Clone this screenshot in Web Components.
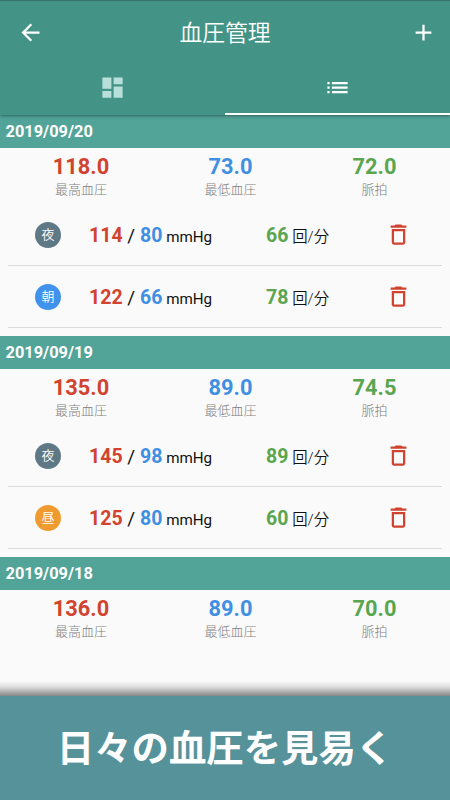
<!DOCTYPE html>
<html lang="ja">
<head>
  <meta charset="UTF-8">
  <meta name="viewport" content="width=device-width, initial-scale=1.0">
  <title>血圧管理</title>
  <style>
    body {
      margin: 0;
      font-family: Roboto, "Noto Sans CJK JP", sans-serif;
      background: #fafafa;
      --red: #d1432f;
      --blue: #3f8fe3;
      --green: #5aa650;
    }
  </style>
</head>
<body>
  <pressure-app></pressure-app>

  <script>
    class AppHeader extends HTMLElement {
      constructor() {
        super();
        this.shadowDOM = this.attachShadow({ mode: "open" });
      }

      connectedCallback() {
        this.render();
      }

      render() {
        this.shadowDOM.innerHTML = `
          <style>
            :host {
              display: block;
              flex: none;
              height: 115px;
              box-sizing: border-box;
              border-top: 1px solid #34766b;
              background: #439486;
              color: white;
              position: relative;
              z-index: 1;
              box-shadow: 0 1px 3px rgba(0, 0, 0, 0.4);
            }

            .bar {
              display: grid;
              grid-template-columns: 61px 1fr 53px;
              align-items: center;
              justify-items: center;
              height: 62px;
            }

            h1 {
              margin: 0;
              box-sizing: border-box;
              width: 100%;
              font-size: 22.8px;
              line-height: 32px;
              font-weight: 350;
              text-align: center;
              padding: 4px 8px 0 0;
            }

            svg {
              display: block;
              fill: currentColor;
            }

            .tabs {
              display: grid;
              grid-template-columns: 1fr 1fr;
              height: 52px;
            }

            .tab {
              display: flex;
              justify-content: center;
              box-sizing: border-box;
              padding-top: 11px;
              border-bottom: 2px solid transparent;
              color: #b9dfda;
            }

            .tab.active {
              color: white;
              border-color: white;
            }
          </style>
          <div class="bar">
            <svg width="27" height="27" viewBox="0 0 24 24"><path d="M20 11H7.83l5.59-5.59L12 4l-8 8 8 8 1.41-1.41L7.83 13H20v-2z"/></svg>
            <h1><slot></slot></h1>
            <svg width="27" height="27" viewBox="0 0 24 24"><path d="M19 13h-6v6h-2v-6H5v-2h6V5h2v6h6v2z"/></svg>
          </div>
          <div class="tabs">
            <div class="tab">
              <svg width="27" height="27" viewBox="0 0 24 24"><path d="M3 13h8V3H3v10zm0 8h8v-6H3v6zm10 0h8V11h-8v10zm0-18v6h8V3h-8z"/></svg>
            </div>
            <div class="tab active">
              <svg width="27" height="27" viewBox="0 0 24 24"><path d="M3 13h2v-2H3v2zm0 4h2v-2H3v2zm0-8h2V7H3v2zm4 4h14v-2H7v2zm0 4h14v-2H7v2zM7 7v2h14V7H7z"/></svg>
            </div>
          </div>
        `;
      }
    }
    customElements.define("app-header", AppHeader);

    class DaySection extends HTMLElement {
      constructor() {
        super();
        this.shadowDOM = this.attachShadow({ mode: "open" });
      }

      connectedCallback() {
        this.render();
      }

      render() {
        this.shadowDOM.innerHTML = `
          <style>
            :host {
              display: block;
              padding-bottom: 8px;
            }

            .date {
              height: 33px;
              box-sizing: border-box;
              padding-left: 5.500px;
              background: #52a398;
              color: white;
              font-size: 16.4px;
              font-weight: 700;
              line-height: 33px;
            }

            .summary {
              display: grid;
              grid-template-columns: 162px 137px 1fr;
              height: 56px;
            }

            .item {
              display: flex;
              flex-direction: column;
              align-items: center;
              padding-top: 6px;
              box-sizing: border-box;
            }

            b {
              font-size: 21.8px;
              line-height: 26px;
            }

            small {
              font-size: 13px;
              line-height: 19px;
              font-weight: 300;
              color: #808080;
            }

            .high { color: var(--red); }
            .low { color: var(--blue); }
            .pulse { color: var(--green); }
          </style>
          <div class="date">${this.getAttribute("date")}</div>
          <div class="summary">
            <div class="item"><b class="high">${this.getAttribute("high")}</b><small>最高血圧</small></div>
            <div class="item"><b class="low">${this.getAttribute("low")}</b><small>最低血圧</small></div>
            <div class="item"><b class="pulse">${this.getAttribute("pulse")}</b><small>脈拍</small></div>
          </div>
          <slot></slot>
        `;
      }
    }
    customElements.define("day-section", DaySection);

    class PressureRow extends HTMLElement {
      constructor() {
        super();
        this.shadowDOM = this.attachShadow({ mode: "open" });
      }

      connectedCallback() {
        this.render();
      }

      render() {
        const colors = { 夜: "#5f7886", 朝: "#4092ec", 昼: "#f09b32" };
        const time = this.getAttribute("time");
        this.shadowDOM.innerHTML = `
          <style>
            :host {
              display: grid;
              grid-template-columns: 54px 177px 119px 1fr;
              align-items: center;
              height: 62px;
              box-sizing: border-box;
              margin: 0 8px;
              padding-left: 27px;
              border-bottom: 1px solid #dcdcdc;
              color: #111;
            }

            .time {
              display: flex;
              align-items: center;
              justify-content: center;
              width: 26px;
              height: 26px;
              border-radius: 50%;
              color: white;
              font-size: 13px;
              font-weight: 350;
              line-height: 26px;
              background: ${colors[time]};
            }

            .value {
              padding-top: 4px;
              font-size: 15.2px;
              line-height: 26px;
              white-space: nowrap;
            }

            .rate {
              font-size: 15.4px;
              font-weight: 350;
            }

            b {
              font-size: 19.5px;
              font-weight: 700;
            }

            .slash {
              margin: 0 1px;
              font-size: 19px;
            }

            .high { color: var(--red); }
            .low { color: var(--blue); }
            .pulse { color: var(--green); }

            svg {
              display: block;
              fill: var(--red);
            }
          </style>
          <div class="time">${time}</div>
          <div class="value"><b class="high">${this.getAttribute("high")}</b> <span class="slash">/</span> <b class="low">${this.getAttribute("low")}</b> mmHg</div>
          <div class="value rate"><b class="pulse">${this.getAttribute("pulse")}</b> 回/分</div>
          <svg width="27" height="27" viewBox="0 0 24 24"><path d="M6 19c0 1.1.9 2 2 2h8c1.1 0 2-.9 2-2V7H6v12zM8 9h8v10H8V9zm7.500-5l-1-1h-5l-1 1H5v2h14V4z"/></svg>
        `;
      }
    }
    customElements.define("pressure-row", PressureRow);

    class CaptionBanner extends HTMLElement {
      constructor() {
        super();
        this.shadowDOM = this.attachShadow({ mode: "open" });
      }

      connectedCallback() {
        this.render();
      }

      render() {
        this.shadowDOM.innerHTML = `
          <style>
            :host {
              display: block;
              flex: none;
              color: white;
              font-size: 37.4px;
              font-weight: 700;
              text-align: center;
            }

            .shade {
              height: 15px;
              background: linear-gradient(rgba(0, 0, 0, 0), rgba(0, 0, 0, 0.12) 40%, rgba(0, 0, 0, 0.46));
            }

            .text {
              height: 104px;
              background: #569299;
              line-height: 106px;
              white-space: nowrap;
            }
          </style>
          <div class="shade"></div>
          <div class="text"><slot></slot></div>
        `;
      }
    }
    customElements.define("caption-banner", CaptionBanner);

    class PressureApp extends HTMLElement {
      constructor() {
        super();
        this.shadowDOM = this.attachShadow({ mode: "open" });
      }

      connectedCallback() {
        this.render();
      }

      render() {
        this.shadowDOM.innerHTML = `
          <style>
            :host {
              display: flex;
              flex-direction: column;
              height: 800px;
              overflow: hidden;
            }

            main {
              flex: 1;
              min-height: 0;
            }
          </style>
          <app-header>血圧管理</app-header>
          <main>
            <day-section date="2019/09/20" high="118.0" low="73.0" pulse="72.0">
              <pressure-row time="夜" high="114" low="80" pulse="66"></pressure-row>
              <pressure-row time="朝" high="122" low="66" pulse="78"></pressure-row>
            </day-section>
            <day-section date="2019/09/19" high="135.0" low="89.0" pulse="74.5">
              <pressure-row time="夜" high="145" low="98" pulse="89"></pressure-row>
              <pressure-row time="昼" high="125" low="80" pulse="60"></pressure-row>
            </day-section>
            <day-section date="2019/09/18" high="136.0" low="89.0" pulse="70.0"></day-section>
          </main>
          <caption-banner>日々の血圧を見易く</caption-banner>
        `;
      }
    }
    customElements.define("pressure-app", PressureApp);
  </script>
</body>
</html>
